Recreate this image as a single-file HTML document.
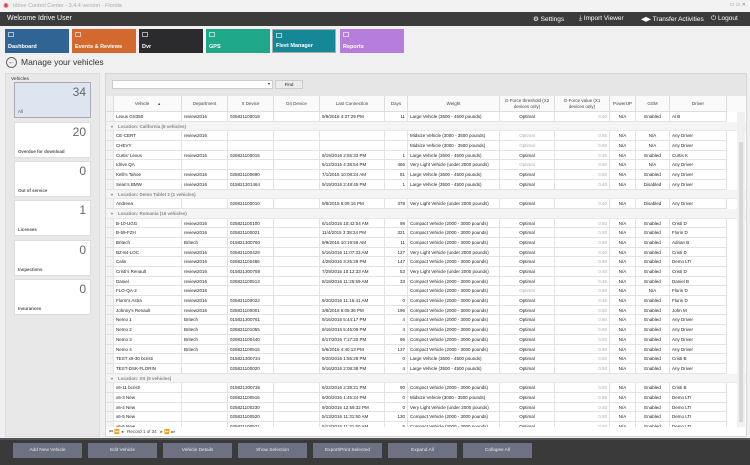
<!DOCTYPE html>
<html><head><meta charset="utf-8"><style>
*{box-sizing:border-box;margin:0;padding:0}
body{width:750px;height:465px;overflow:hidden;background:#f0f0f0;font-family:"Liberation Sans",sans-serif;position:relative;color:#222}
.abs{position:absolute}
.tb{left:0;top:0;width:750px;height:12px;background:#f2f2f2;font-size:5.5px;color:#aaa;padding:3px 0 0 13px}
.hd{left:0;top:12px;width:750px;height:14px;background:#3b3b3b;color:#fff;font-size:7px;padding:3px 0 0 7px}
.hd .m{position:absolute;top:3px;font-size:6.5px}
.tile{top:29px;height:24px;width:64px;color:#fff;font-size:5.5px;font-weight:bold}
.tile span{position:absolute;left:3px;bottom:3px}
.tile i{position:absolute;left:3px;top:3px;width:6px;height:5px;border:1px solid rgba(255,255,255,.6)}
h1{position:absolute;left:21px;top:57px;font-size:8.5px;font-weight:normal;color:#333}
.back{left:6px;top:57px;width:11px;height:11px;border:1px solid #666;border-radius:50%;font-size:7px;line-height:9px;text-align:center;color:#555}
.lp{left:5px;top:73px;width:95px;height:364px;background:#e8e8e8;border:1px solid #ddd}
.lp .t{position:absolute;left:5px;top:3px;font-size:4.8px;color:#333}
.ct{position:absolute;left:8px;width:77px;height:36px;background:#fff;border:1px solid #ddd}
.ct .n{position:absolute;right:4px;top:2px;font-size:12px;color:#666}
.ct .l{position:absolute;left:3px;bottom:3px;font-size:4.4px;color:#555;font-weight:bold}
.gp{left:105px;top:73px;width:642px;height:364px;background:#e6e6e6;border:1px solid #d5d5d5}
.cb{left:112px;top:80px;width:161px;height:9px;background:#fff;border:1px solid #ccc;font-size:4px;text-align:right;padding-right:2px}
.fb{left:275px;top:80px;width:28px;height:9px;background:#ececec;border:1px solid #ccc;font-size:4.5px;text-align:center;line-height:8px}
.grid{left:106px;top:96px;width:640px;height:331px;background:#fff;overflow:hidden}
.r{display:flex;height:9.7px;font-size:4.5px;line-height:9.2px;white-space:nowrap}
.r>*{font-style:normal;font-weight:normal;border-right:1px solid #e3e3e3;border-bottom:1px solid #e3e3e3;overflow:hidden;padding:0 2px;flex:none}
.r>*:nth-child(1){width:8px;background:#f3f3f3;padding:0}
.r>*:nth-child(2){width:68px}.r>*:nth-child(3){width:46px}.r>*:nth-child(4){width:46px}.r>*:nth-child(5){width:46px}
.r>*:nth-child(6){width:65px}.r>*:nth-child(7){width:23px;text-align:right}.r>*:nth-child(8){width:92px}
.r>*:nth-child(9){width:55px;text-align:center}.r>*:nth-child(10){width:55px;text-align:right;color:#aaa}
.r>*:nth-child(11){width:26px;text-align:center}.r>*:nth-child(12){width:34px;text-align:center}.r>*:nth-child(13){width:57px}
.o{color:#aaa}
.h{height:16px;background:#fafafa;white-space:normal}
.h>*{line-height:5.5px;display:flex;align-items:center;justify-content:center;text-align:center!important;color:#444!important;background:#fafafa;border-color:#ddd}
.g{height:9.7px;background:#f4f4f4;font-size:4.5px;line-height:9.7px;color:#888;font-weight:bold;padding-left:12px;position:relative;border-bottom:1px solid #e8e8e8}
.g:before{content:"▾";position:absolute;left:5px;font-size:4px}
.sb{left:737px;top:112px;width:8px;height:315px;background:#f0f0f0}
.sb i{position:absolute;left:2px;top:30px;width:4px;height:280px;background:#d8d8d8}
.pg{left:106px;top:427px;width:640px;height:9px;font-size:4.5px;color:#444;padding:2px 0 0 3px;background:#fff}
.bb{left:0;top:438px;width:750px;height:27px;background:#3a3a3a;border-top:2px solid #555}
.bt{top:443px;width:69px;height:15px;background:#6e7181;color:#e8e8e8;font-size:4.8px;text-align:center;line-height:15px}
</style></head><body>
<div class="abs tb"><span style="position:absolute;left:3px;top:2px;color:#d33;font-size:7px">✺</span>Idrive Control Center - 3.4.4 version - Florida<span style="position:absolute;right:4px;top:2px;font-size:5px;color:#888">▭ ▭ ✕</span></div>
<div class="abs hd">Welcome Idrive User
<span class="m" style="left:533px">⚙ Settings</span><span class="m" style="left:579px">⤓ Import Viewer</span><span class="m" style="left:641px">◀▶ Transfer Activities</span><span class="m" style="left:711px">⏻ Logout</span></div>
<div class="abs tile" style="left:5px;background:#2f6494"><i></i><span>Dashboard</span></div>
<div class="abs tile" style="left:72px;background:#d3692f"><i></i><span>Events &amp; Reviews</span></div>
<div class="abs tile" style="left:139px;background:#2b2b2e"><i></i><span>Dvr</span></div>
<div class="abs tile" style="left:206px;background:#1fa78a"><i></i><span>GPS</span></div>
<div class="abs tile" style="left:272px;background:#168797;border:1px solid #aaa"><i></i><span>Fleet Manager</span></div>
<div class="abs tile" style="left:340px;background:#b67ddd"><i></i><span>Reports</span></div>
<div class="abs back">←</div><h1>Manage your vehicles</h1>
<div class="abs lp"><span class="t">Vehicles</span>
<div class="ct" style="top:8px;background:#dde5f1;border-color:#aab"><span class="n">34</span><span class="l" style="font-weight:normal">All</span></div>
<div class="ct" style="top:48px"><span class="n">20</span><span class="l">Overdue for download</span></div>
<div class="ct" style="top:87px"><span class="n">0</span><span class="l">Out of service</span></div>
<div class="ct" style="top:126px"><span class="n">1</span><span class="l">Licenses</span></div>
<div class="ct" style="top:166px"><span class="n">0</span><span class="l">Inspections</span></div>
<div class="ct" style="top:205px"><span class="n">0</span><span class="l">Insurances</span></div>
</div>
<div class="abs gp"></div>
<div class="abs cb">▾</div><div class="abs fb">Find</div>
<div class="abs grid">
<div class="r h"><i></i><b>Vehicle &nbsp; &nbsp; &nbsp; ▴</b><b>Department</b><b>X Device</b><b>D4 Device</b><b>Last Connection</b><b>Days</b><b>Weight</b><b>G-Force threshold (X2 devices only)</b><b>G-Force value (X1 devices only)</b><b>PowerUP</b><b>GSM</b><b>Driver</b></div>
<div class="r"><i></i><b>Lexus GS350</b><b>review2016</b><b>025821100019</b><b></b><b>9/9/2016 4:37:29 PM</b><b>11</b><b>Large Vehicle (3500 - 4500 pounds)</b><b>Optimal</b><b>0.40</b><b>N/A</b><b>Enabled</b><b>Al B</b></div>
<div class="g">Location: California (6 vehicles)</div>
<div class="r"><i></i><b>CE-CERT</b><b>review2016</b><b></b><b></b><b></b><b></b><b>Midsize Vehicle (3000 - 3500 pounds)</b><b class="o">Optimal</b><b>0.55</b><b>N/A</b><b>N/A</b><b>Any Driver</b></div>
<div class="r"><i></i><b>CHEVY</b><b></b><b></b><b></b><b></b><b></b><b>Midsize Vehicle (3000 - 3500 pounds)</b><b class="o">Optimal</b><b>0.50</b><b>N/A</b><b>N/A</b><b>Any Driver</b></div>
<div class="r"><i></i><b>Curtis' Lexus</b><b>review2016</b><b>025821100015</b><b></b><b>9/19/2016 2:55:33 PM</b><b>1</b><b>Large Vehicle (3500 - 4500 pounds)</b><b>Optimal</b><b>0.45</b><b>N/A</b><b>Enabled</b><b>Curtis K</b></div>
<div class="r"><i></i><b>Idrive QA</b><b></b><b></b><b></b><b>6/12/2015 4:38:54 PM</b><b>466</b><b>Very Light Vehicle (under 2000 pounds)</b><b class="o">Optimal</b><b>0.50</b><b>N/A</b><b>N/A</b><b>Any Driver</b></div>
<div class="r"><i></i><b>Kelli's Tahoe</b><b>review2016</b><b>025821100690</b><b></b><b>7/1/2016 10:08:24 AM</b><b>81</b><b>Large Vehicle (3500 - 4500 pounds)</b><b>Optimal</b><b>0.60</b><b>N/A</b><b>Enabled</b><b>Any Driver</b></div>
<div class="r"><i></i><b>Sean's BMW</b><b>review2016</b><b>015821301464</b><b></b><b>9/19/2016 2:48:45 PM</b><b>1</b><b>Large Vehicle (3500 - 4500 pounds)</b><b>Optimal</b><b>0.40</b><b>N/A</b><b>Disabled</b><b>Any Driver</b></div>
<div class="g">Location: Demo Tablet 2 (1 vehicles)</div>
<div class="r"><i></i><b>Andreea</b><b></b><b>025821100010</b><b></b><b>9/8/2015 6:09:16 PM</b><b>378</b><b>Very Light Vehicle (under 2000 pounds)</b><b>Optimal</b><b>0.40</b><b>N/A</b><b>Disabled</b><b>Any Driver</b></div>
<div class="g">Location: Romania (16 vehicles)</div>
<div class="r"><i></i><b>B-10-UGG</b><b>review2016</b><b>025821100100</b><b></b><b>6/14/2016 10:42:04 AM</b><b>98</b><b>Compact Vehicle (2000 - 3000 pounds)</b><b>Optimal</b><b>0.50</b><b>N/A</b><b>Enabled</b><b>Cristi D</b></div>
<div class="r"><i></i><b>B-59-FZH</b><b>review2016</b><b>025821100021</b><b></b><b>11/4/2015 3:38:24 PM</b><b>321</b><b>Compact Vehicle (2000 - 3000 pounds)</b><b>Optimal</b><b>0.50</b><b>N/A</b><b>Enabled</b><b>Florin D</b></div>
<div class="r"><i></i><b>Britech</b><b>Britech</b><b>015821300760</b><b></b><b>9/9/2016 10:19:56 AM</b><b>11</b><b>Compact Vehicle (2000 - 3000 pounds)</b><b>Optimal</b><b>0.50</b><b>N/A</b><b>Enabled</b><b>Adrian B</b></div>
<div class="r"><i></i><b>BZ-84-LOC</b><b>review2016</b><b>025821100429</b><b></b><b>5/16/2016 11:07:33 AM</b><b>127</b><b>Very Light Vehicle (under 2000 pounds)</b><b>Optimal</b><b>0.40</b><b>N/A</b><b>Enabled</b><b>Cristi D</b></div>
<div class="r"><i></i><b>Calin</b><b>review2016</b><b>025821100486</b><b></b><b>4/28/2016 3:26:29 PM</b><b>147</b><b>Compact Vehicle (2000 - 3000 pounds)</b><b>Optimal</b><b>0.50</b><b>N/A</b><b>Enabled</b><b>Demo LTI</b></div>
<div class="r"><i></i><b>Cristi's Renault</b><b>review2016</b><b>015821300759</b><b></b><b>7/29/2016 10:12:33 AM</b><b>53</b><b>Very Light Vehicle (under 2000 pounds)</b><b>Optimal</b><b>0.40</b><b>N/A</b><b>Enabled</b><b>Cristi D</b></div>
<div class="r"><i></i><b>Daniel</b><b>review2016</b><b>025821100513</b><b></b><b>8/18/2016 11:25:59 AM</b><b>33</b><b>Compact Vehicle (2000 - 3000 pounds)</b><b>Optimal</b><b>0.45</b><b>N/A</b><b>Enabled</b><b>Daniel B</b></div>
<div class="r"><i></i><b>FLO-QA-2</b><b>review2016</b><b></b><b></b><b></b><b></b><b>Compact Vehicle (2000 - 3000 pounds)</b><b class="o">Optimal</b><b>0.50</b><b>N/A</b><b>N/A</b><b>Florin D</b></div>
<div class="r"><i></i><b>Florin's Astra</b><b>review2016</b><b>025821100022</b><b></b><b>9/20/2016 11:16:41 AM</b><b>0</b><b>Compact Vehicle (2000 - 3000 pounds)</b><b>Optimal</b><b>0.45</b><b>N/A</b><b>Enabled</b><b>Florin D</b></div>
<div class="r"><i></i><b>Johnny's Renault</b><b>review2016</b><b>025821100001</b><b></b><b>3/8/2016 6:05:36 PM</b><b>196</b><b>Compact Vehicle (2000 - 3000 pounds)</b><b>Optimal</b><b>0.50</b><b>N/A</b><b>Enabled</b><b>John M</b></div>
<div class="r"><i></i><b>Nemo 1</b><b>Britech</b><b>015821300761</b><b></b><b>9/16/2016 5:44:17 PM</b><b>4</b><b>Compact Vehicle (2000 - 3000 pounds)</b><b>Optimal</b><b>0.50</b><b>N/A</b><b>Enabled</b><b>Any Driver</b></div>
<div class="r"><i></i><b>Nemo 2</b><b>Britech</b><b>025821101055</b><b></b><b>9/16/2016 5:45:08 PM</b><b>4</b><b>Compact Vehicle (2000 - 3000 pounds)</b><b>Optimal</b><b>0.50</b><b>N/A</b><b>Enabled</b><b>Any Driver</b></div>
<div class="r"><i></i><b>Nemo 3</b><b>Britech</b><b>025821100440</b><b></b><b>6/17/2016 7:17:20 PM</b><b>95</b><b>Compact Vehicle (2000 - 3000 pounds)</b><b>Optimal</b><b>0.50</b><b>N/A</b><b>Enabled</b><b>Any Driver</b></div>
<div class="r"><i></i><b>Nemo 4</b><b>Britech</b><b>025821100515</b><b></b><b>5/6/2016 4:40:13 PM</b><b>137</b><b>Compact Vehicle (2000 - 3000 pounds)</b><b>Optimal</b><b>0.50</b><b>N/A</b><b>Enabled</b><b>Any Driver</b></div>
<div class="r"><i></i><b>TEST x6-30 bcristi</b><b></b><b>015821300734</b><b></b><b>9/20/2016 1:55:28 PM</b><b>0</b><b>Large Vehicle (3500 - 4500 pounds)</b><b>Optimal</b><b>0.60</b><b>N/A</b><b>Enabled</b><b>Cristi B</b></div>
<div class="r"><i></i><b>TEST-DSK-FLORIN</b><b></b><b>025821100020</b><b></b><b>9/16/2016 2:08:38 PM</b><b>4</b><b>Large Vehicle (3500 - 4500 pounds)</b><b>Optimal</b><b>0.50</b><b>N/A</b><b>Enabled</b><b>Any Driver</b></div>
<div class="g">Location: XS (9 vehicles)</div>
<div class="r"><i></i><b>x6-11 bcristi</b><b></b><b>015821300735</b><b></b><b>6/22/2016 2:39:21 PM</b><b>90</b><b>Compact Vehicle (2000 - 3000 pounds)</b><b>Optimal</b><b>0.50</b><b>N/A</b><b>Enabled</b><b>Cristi B</b></div>
<div class="r"><i></i><b>x6-3 New</b><b></b><b>025821100516</b><b></b><b>9/20/2016 1:45:24 PM</b><b>0</b><b>Midsize Vehicle (3000 - 3500 pounds)</b><b>Optimal</b><b>0.55</b><b>N/A</b><b>Enabled</b><b>Demo LTI</b></div>
<div class="r"><i></i><b>x6-4 New</b><b></b><b>025821100230</b><b></b><b>9/20/2016 12:59:32 PM</b><b>0</b><b>Very Light Vehicle (under 2000 pounds)</b><b>Optimal</b><b>0.40</b><b>N/A</b><b>Enabled</b><b>Demo LTI</b></div>
<div class="r"><i></i><b>x6-5 New</b><b></b><b>025821100520</b><b></b><b>5/13/2016 11:31:50 AM</b><b>130</b><b>Compact Vehicle (2000 - 3000 pounds)</b><b>Optimal</b><b>0.50</b><b>N/A</b><b>Enabled</b><b>Demo LTI</b></div>
<div class="r"><i></i><b>x6-6 New</b><b></b><b>025821100521</b><b></b><b>5/13/2016 11:31:50 AM</b><b>5</b><b>Compact Vehicle (2000 - 3000 pounds)</b><b>Optimal</b><b>0.50</b><b>N/A</b><b>Enabled</b><b>Demo LTI</b></div>
</div>
<div class="abs sb"><i></i></div>
<div class="abs pg">⏮ ⏪ ◂ &nbsp; Record 1 of 34 &nbsp; ▸ ⏩ ⏭</div>
<div class="abs bb"></div>
<div class="abs bt" style="left:13px">Add New Vehicle</div>
<div class="abs bt" style="left:88px">Edit Vehicle</div>
<div class="abs bt" style="left:163px">Vehicle Details</div>
<div class="abs bt" style="left:238px">Show Selection</div>
<div class="abs bt" style="left:313px">Export/Print Selected</div>
<div class="abs bt" style="left:388px">Expand All</div>
<div class="abs bt" style="left:463px">Collapse All</div>
</body></html>
